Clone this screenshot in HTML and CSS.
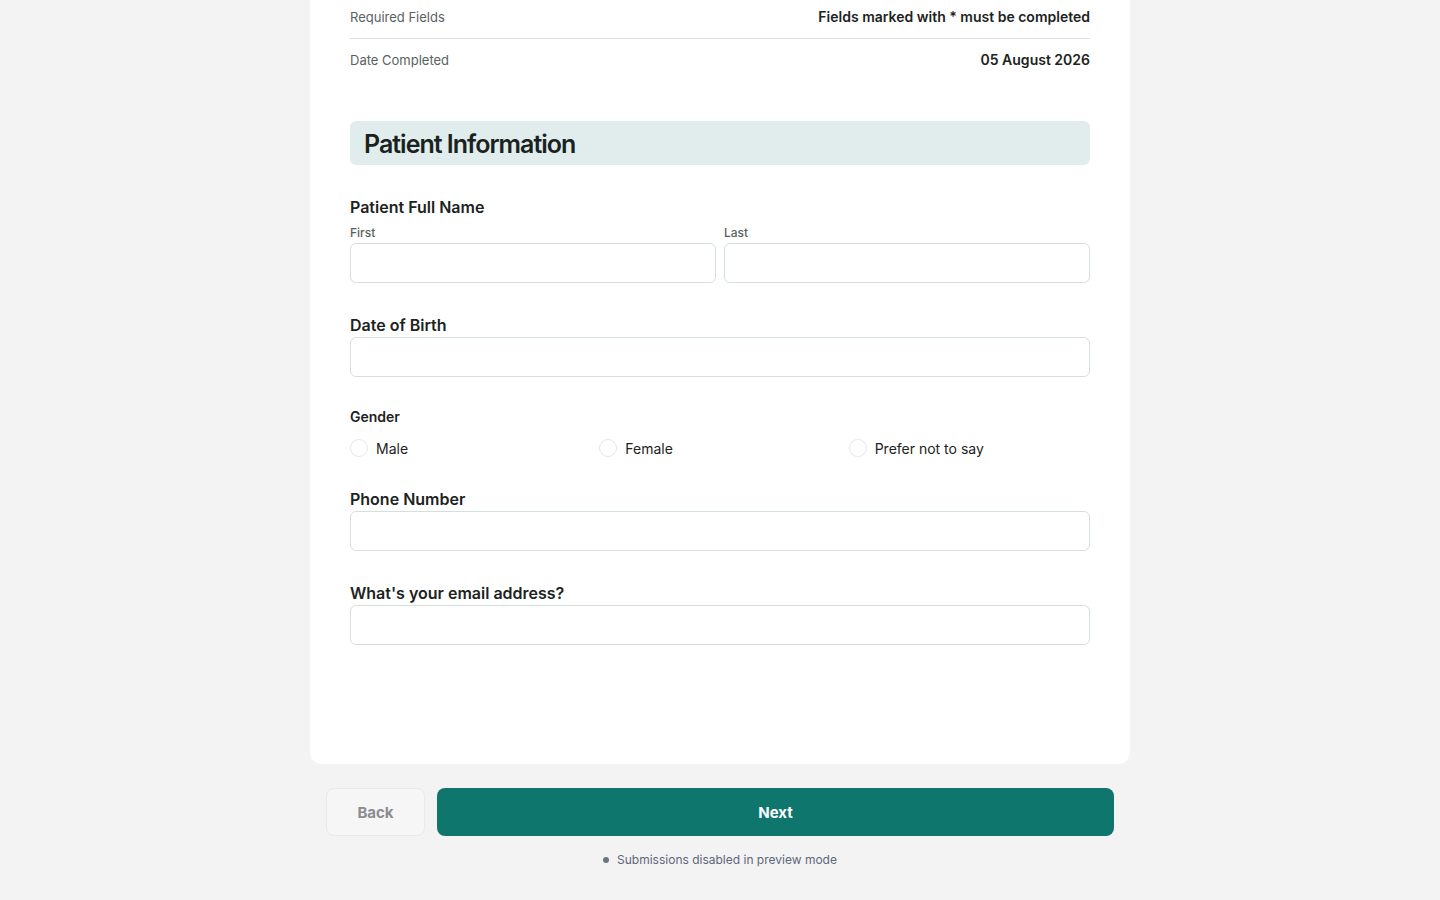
FILE: index.html
```html
<!DOCTYPE html>
<html lang="en">
<head>
<meta charset="utf-8">
<title>Patient Information</title>
<link rel="stylesheet" href="styles.css">
</head>
<body>
<main class="page">
  <section class="card">
    <div class="meta-row meta-row--first">
      <span class="meta-label">Required Fields</span>
      <span class="meta-value">Fields marked with * must be completed</span>
    </div>
    <div class="meta-row meta-row--last">
      <span class="meta-label">Date Completed</span>
      <span class="meta-value">05 August 2026</span>
    </div>

    <h2 class="section-title">Patient Information</h2>

    <div class="field">
      <div class="field-label">Patient Full Name</div>
      <div class="name-grid">
        <div class="sub-field">
          <label class="sub-label">First</label>
          <input class="text-input" type="text">
        </div>
        <div class="sub-field">
          <label class="sub-label">Last</label>
          <input class="text-input" type="text">
        </div>
      </div>
    </div>

    <div class="field">
      <label class="field-label">Date of Birth</label>
      <input class="text-input" type="text">
    </div>

    <div class="field field--radio">
      <div class="field-label field-label--small">Gender</div>
      <div class="radio-grid">
        <label class="radio"><span class="radio-circle"></span><span class="radio-text">Male</span></label>
        <label class="radio"><span class="radio-circle"></span><span class="radio-text">Female</span></label>
        <label class="radio"><span class="radio-circle"></span><span class="radio-text">Prefer not to say</span></label>
      </div>
    </div>

    <div class="field">
      <label class="field-label">Phone Number</label>
      <input class="text-input" type="text">
    </div>

    <div class="field field--end">
      <label class="field-label">What's your email address?</label>
      <input class="text-input" type="text">
    </div>
  </section>

  <div class="actions">
    <button class="btn btn-back" type="button">Back</button>
    <button class="btn btn-next" type="button">Next</button>
  </div>
  <p class="preview-note"><span class="dot"></span>Submissions disabled in preview mode</p>
</main>
</body>
</html>
```

FILE: styles.css
```css
* { box-sizing: border-box; }

html, body {
  margin: 0;
  padding: 0;
  background: #f3f3f3;
}

body {
  font-family: Inter, "Liberation Sans", sans-serif;
  color: #1c2321;
}

.page {
  width: 820px;
  margin: 0 auto;
}

.card {
  background: #ffffff;
  border-radius: 0 0 12px 12px;
  padding: 0 40px 119px;
}

.meta-row {
  display: flex;
  justify-content: space-between;
  align-items: center;
  line-height: 20px;
}

.meta-row--first {
  padding: 7px 0 11px;
  border-bottom: 1px solid #d9e4e2;
}

.meta-row--last {
  padding: 11px 0 11px;
}

.meta-label {
  font-size: 13px;
  color: #59625f;
}

.meta-value {
  font-size: 14px;
  font-weight: 600;
  color: #1c2321;
}

.section-title {
  margin: 40px 0 30px;
  height: 44px;
  padding: 1px 14px 0;
  display: flex;
  align-items: center;
  background: #e1eded;
  border-radius: 6px;
  font-size: 25px;
  font-weight: 600;
  letter-spacing: -1px;
  color: #1a2220;
}

.field {
  display: flex;
  flex-direction: column;
  margin-bottom: 30px;
}

.field--end { margin-bottom: 0; }

.field-label {
  font-size: 16px;
  font-weight: 600;
  line-height: 24px;
  color: #1c2321;
}

.field-label--small {
  font-size: 14px;
  line-height: 20px;
  margin-bottom: 11px;
}

.name-grid {
  display: grid;
  grid-template-columns: 1fr 1fr;
  gap: 8px;
  margin-top: 6px;
}

.sub-field {
  display: flex;
  flex-direction: column;
}

.sub-label {
  font-size: 12px;
  font-weight: 500;
  line-height: 16px;
  color: #59625f;
  margin-bottom: 2px;
}

.text-input {
  display: block;
  width: 100%;
  height: 40px;
  border: 1px solid #d5e0de;
  border-radius: 6px;
  background: #fff;
  font: inherit;
  padding: 0 12px;
  outline: none;
}

.field--radio {
  margin-bottom: 29px;
}

.radio-grid {
  display: grid;
  grid-template-columns: repeat(3, 1fr);
  gap: 8px;
}

.radio {
  display: flex;
  align-items: center;
  gap: 8px;
  height: 20px;
  font-size: 14px;
  color: #1c2321;
}

.radio-circle {
  width: 18px;
  height: 18px;
  border-radius: 50%;
  border: 1px solid #e4e9e8;
  background: #fff;
  flex: none;
}

.actions {
  display: flex;
  gap: 12px;
  padding: 24px 16px 0;
}

.btn {
  height: 48px;
  border-radius: 8px;
  font-family: Inter, "Liberation Sans", sans-serif;
  font-size: 15px;
  font-weight: 700;
  cursor: pointer;
}

.btn-back {
  width: 99px;
  background: #f6f6f6;
  border: 1px solid #eaeaea;
  color: #8b8b90;
}

.btn-next {
  flex: 1;
  background: #0f766e;
  border: none;
  color: #ffffff;
}

.preview-note {
  margin: 16px 0 0;
  display: flex;
  justify-content: center;
  align-items: center;
  gap: 8px;
  font-size: 12px;
  line-height: 16px;
  color: #5d667a;
}

.dot {
  width: 6px;
  height: 6px;
  border-radius: 50%;
  background: #6b7385;
}
```
